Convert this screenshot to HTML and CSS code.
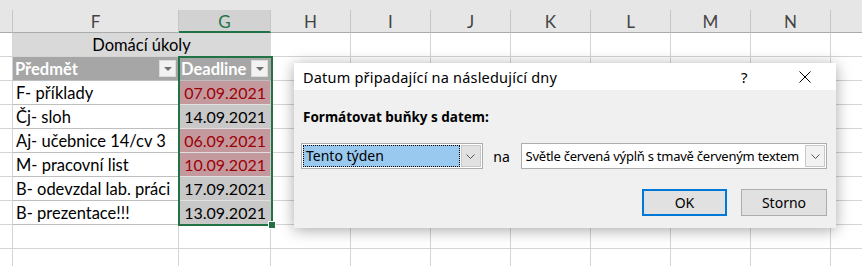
FILE: index.html
```html
<!DOCTYPE html>
<html lang="cs">
<head>
  <meta charset="UTF-8" />
  <title>Domácí úkoly</title>
  <link rel="stylesheet" href="styles.css">
</head>
<body>
  <div class="sheet">
    <div class="strip"></div>

    <div class="row colhead">
      <div class="c ce"></div>
      <div class="c cf">F</div>
      <div class="c cg sel">G</div>
      <div class="c cx">H</div>
      <div class="c cx">I</div>
      <div class="c cx">J</div>
      <div class="c cx">K</div>
      <div class="c cx">L</div>
      <div class="c cx">M</div>
      <div class="c cx">N</div>
      <div class="c co"></div>
    </div>

    <div class="row">
      <div class="c ce"></div>
      <div class="c merged">Domácí úkoly</div>
      <div class="c cx"></div><div class="c cx"></div><div class="c cx"></div><div class="c cx"></div>
      <div class="c cx"></div><div class="c cx"></div><div class="c cx"></div><div class="c co"></div>
    </div>

    <div class="row">
      <div class="c ce"></div>
      <div class="c cf th">Předmět <span class="filter"></span></div>
      <div class="c cg th">Deadline <span class="filter"></span></div>
      <div class="c cx"></div><div class="c cx"></div><div class="c cx"></div><div class="c cx"></div>
      <div class="c cx"></div><div class="c cx"></div><div class="c cx"></div><div class="c co"></div>
    </div>

    <div class="row">
      <div class="c ce"></div>
      <div class="c cf td">F- příklady</div>
      <div class="c cg date red">07.09.2021</div>
      <div class="c cx"></div><div class="c cx"></div><div class="c cx"></div><div class="c cx"></div>
      <div class="c cx"></div><div class="c cx"></div><div class="c cx"></div><div class="c co"></div>
    </div>
    <div class="row">
      <div class="c ce"></div>
      <div class="c cf td">Čj- sloh</div>
      <div class="c cg date">14.09.2021</div>
      <div class="c cx"></div><div class="c cx"></div><div class="c cx"></div><div class="c cx"></div>
      <div class="c cx"></div><div class="c cx"></div><div class="c cx"></div><div class="c co"></div>
    </div>
    <div class="row">
      <div class="c ce"></div>
      <div class="c cf td">Aj- učebnice 14/cv 3</div>
      <div class="c cg date red">06.09.2021</div>
      <div class="c cx"></div><div class="c cx"></div><div class="c cx"></div><div class="c cx"></div>
      <div class="c cx"></div><div class="c cx"></div><div class="c cx"></div><div class="c co"></div>
    </div>
    <div class="row">
      <div class="c ce"></div>
      <div class="c cf td">M- pracovní list</div>
      <div class="c cg date red">10.09.2021</div>
      <div class="c cx"></div><div class="c cx"></div><div class="c cx"></div><div class="c cx"></div>
      <div class="c cx"></div><div class="c cx"></div><div class="c cx"></div><div class="c co"></div>
    </div>
    <div class="row">
      <div class="c ce"></div>
      <div class="c cf td">B- odevzdal lab. práci</div>
      <div class="c cg date">17.09.2021</div>
      <div class="c cx"></div><div class="c cx"></div><div class="c cx"></div><div class="c cx"></div>
      <div class="c cx"></div><div class="c cx"></div><div class="c cx"></div><div class="c co"></div>
    </div>
    <div class="row">
      <div class="c ce"></div>
      <div class="c cf td">B- prezentace!!!</div>
      <div class="c cg date">13.09.2021</div>
      <div class="c cx"></div><div class="c cx"></div><div class="c cx"></div><div class="c cx"></div>
      <div class="c cx"></div><div class="c cx"></div><div class="c cx"></div><div class="c co"></div>
    </div>

    <div class="row">
      <div class="c ce"></div><div class="c cf"></div><div class="c cg"></div>
      <div class="c cx"></div><div class="c cx"></div><div class="c cx"></div><div class="c cx"></div>
      <div class="c cx"></div><div class="c cx"></div><div class="c cx"></div><div class="c co"></div>
    </div>
    <div class="row">
      <div class="c ce"></div><div class="c cf"></div><div class="c cg"></div>
      <div class="c cx"></div><div class="c cx"></div><div class="c cx"></div><div class="c cx"></div>
      <div class="c cx"></div><div class="c cx"></div><div class="c cx"></div><div class="c co"></div>
    </div>

    <div class="selection"><span class="handle"></span></div>

    <div class="dialog">
      <div class="dlg-title">
        <span class="dlg-caption">Datum připadající na následující dny</span>
        <span class="dlg-help">?</span>
        <svg class="dlg-close" width="12" height="12" viewBox="0 0 12 12">
          <path d="M0.5 0.5 L11.5 11.5 M11.5 0.5 L0.5 11.5" stroke="#000" stroke-width="1" fill="none" />
        </svg>
      </div>
      <div class="dlg-body">
        <div class="dlg-label">Formátovat buňky s datem:</div>
        <div class="dlg-line">
          <div class="combo combo-a">
            <span class="combo-text focus">Tento týden</span>
            <span class="combo-btn"><svg width="9" height="5" viewBox="0 0 9 5"><path d="M0.5 0.5 L4.5 4.5 L8.5 0.5" stroke="#555" fill="none" /></svg></span>
          </div>
          <span class="na">na</span>
          <div class="combo combo-b">
            <span class="combo-text">Světle červená výplň s tmavě červeným textem</span>
            <span class="combo-btn"><svg width="9" height="5" viewBox="0 0 9 5"><path d="M0.5 0.5 L4.5 4.5 L8.5 0.5" stroke="#555" fill="none" /></svg></span>
          </div>
        </div>
        <div class="dlg-buttons">
          <button class="btn btn-ok">OK</button>
          <button class="btn">Storno</button>
        </div>
      </div>
    </div>
  </div>
</body>
</html>
```

FILE: styles.css
```css
body { margin: 0; background: #fff; overflow: hidden; }
.sheet { position: relative; width: 862px; height: 266px; font-family: Lato, "Liberation Sans", sans-serif; font-size: 16.5px; color: #000; }
.strip { height: 10px; background: #e6e6e6; }

.row { display: flex; height: 24px; }
.c { box-sizing: border-box; height: 100%; border-right: 1px solid #d4d4d4; border-bottom: 1px solid #d4d4d4; flex: none; white-space: nowrap; overflow: hidden; }
.ce { width: 13px; }
.cf { width: 166px; }
.cg { width: 92px; }
.cx { width: 80px; }
.co { width: 31px; border-right: none; }

.colhead { height: 23px; background: #e6e6e6; color: #444; font-size: 17px; }
.colhead .c { border-right-color: #c6c6c6; border-bottom-color: #ababab; text-align: center; line-height: 23px; }
.colhead .sel { background: #d2d2d2; color: #217346; border-bottom: 2px solid #217346; }

.merged { width: 258px; background: #d9d9d9; text-align: center; line-height: 24px; border-right-color: #d9d9d9; }

.th { background: #a6a6a6; color: #fff; font-weight: bold; padding-left: 2px; line-height: 24px; display: flex; justify-content: space-between; align-items: center; padding-right: 2px; border-right-color: #a6a6a6; border-bottom-color: #bfbfbf; }
.filter { width: 17px; height: 17px; background: #f2f2f2; position: relative; border: 1px solid #dcdcdc; box-sizing: border-box; }
.filter::after { content: ""; position: absolute; left: 4px; top: 6px; border-left: 4px solid transparent; border-right: 4px solid transparent; border-top: 4px solid #707070; }

.td { padding-left: 3px; line-height: 24px; border-left: 1px solid #bfbfbf; border-bottom-color: #bfbfbf; border-right-color: #bfbfbf; }
.ce + .td { border-left: none; }
.date { background: #c8c8c8; font-size: 16px; text-align: right; padding-right: 4px; line-height: 24px; border-bottom-color: #e0e0e0; border-right-color: #c8c8c8; }
.date.red { background: #c4999e; color: #9c0006; }

.selection { position: absolute; left: 178px; top: 56px; width: 95px; height: 170px; box-sizing: border-box; border: 2px solid #217346; pointer-events: none; }
.handle { position: absolute; right: -5px; bottom: -5px; width: 6px; height: 6px; background: #217346; border: 1px solid #fff; }

.dialog { position: absolute; left: 294px; top: 63px; width: 542px; height: 165px; background: #f0f0f0; box-shadow: 0 2px 14px rgba(0, 0, 0, 0.35); font-family: "Noto Sans", "Open Sans", sans-serif; font-size: 14px; color: #000; }
.dlg-title { height: 27px; background: #fff; display: flex; align-items: center; padding-left: 9px; }
.dlg-caption { flex: 1; font-size: 14.5px; letter-spacing: 0.2px; }
.dlg-help { width: 20px; margin-right: 38px; font-size: 15px; }
.dlg-close { margin-right: 25px; }
.dlg-body { padding: 18px 9px 0 7px; }
.dlg-label { font-weight: bold; font-size: 13.5px; padding-left: 2px; }
.dlg-line { display: flex; align-items: center; margin-top: 17px; }
.combo { box-sizing: border-box; height: 26px; background: #fff; border: 1px solid #adadad; display: flex; align-items: center; padding: 1px; }
.combo-a { width: 182px; }
.combo-b { width: 307px; }
.combo-text { flex: 1; height: 100%; box-sizing: border-box; padding-left: 3px; line-height: 22px; white-space: nowrap; overflow: hidden; }
.combo-b .combo-text { font-size: 13px; letter-spacing: -0.25px; }
.combo-text.focus { background: #99c9ef; border: 1px dotted #000; line-height: 20px; padding-left: 2px; }
.combo-btn { width: 20px; height: 22px; margin-left: 1px; background: #e1e1e1; border: 1px solid #c8c8c8; box-sizing: border-box; display: flex; align-items: center; justify-content: center; }
.combo-b .combo-btn { background: #f2f2f2; }
.na { width: 38px; text-align: center; }
.dlg-buttons { display: flex; justify-content: flex-end; gap: 14px; margin-top: 20px; }
.btn { box-sizing: border-box; width: 86px; height: 27px; background: #e1e1e1; border: 1px solid #adadad; font-family: inherit; font-size: 14px; padding: 0; }
.btn-ok { width: 85px; border: 2px solid #0078d7; }
```
